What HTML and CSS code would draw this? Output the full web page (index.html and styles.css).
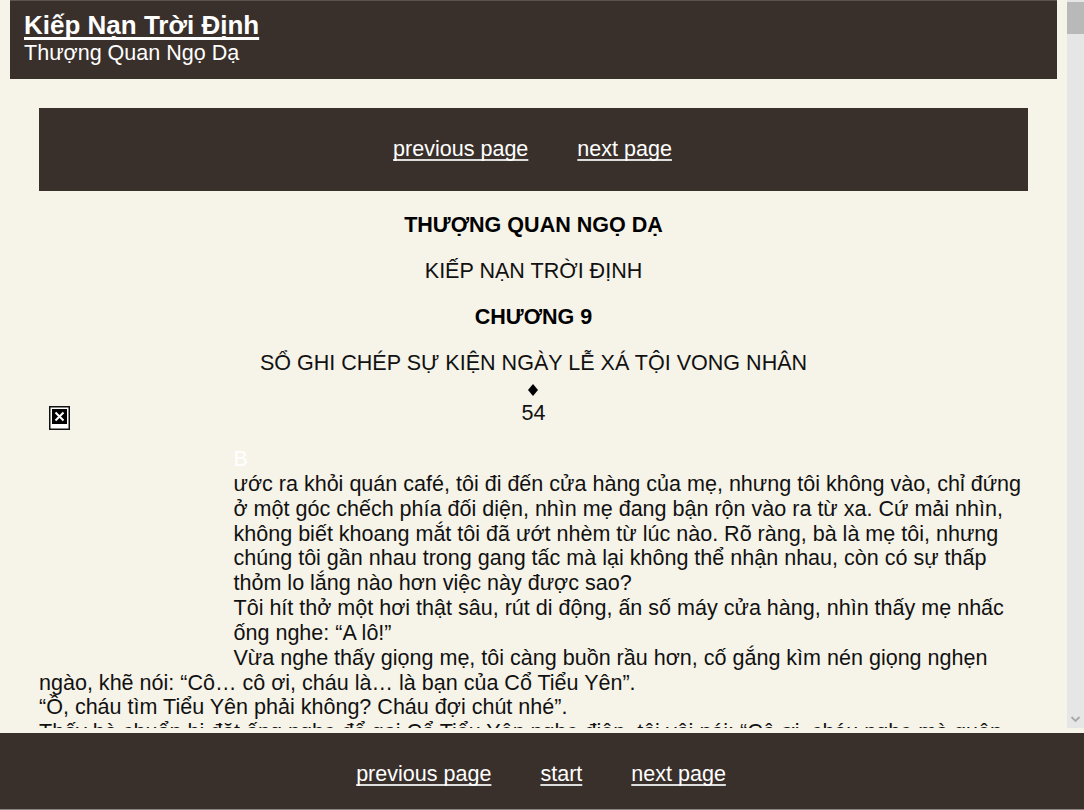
FILE: index.html
```
<!DOCTYPE html>
<html lang="vi">
	<head>
		<meta charset="UTF-8">
		<title>Kiếp Nạn Trời Định</title>
		<link rel="stylesheet" href="styles.css">
	</head>
	<body>
		<div class="reader">
			<div class="page">
				<div class="header">
					<a class="title" href="#">Kiếp Nạn Trời Định</a>
					<div class="author">Thượng Quan Ngọ Dạ</div>
				</div>
				<div class="content">
					<div class="pager">
						<a href="#">previous page</a>
						<a href="#">next page</a>
					</div>
					<p class="heading"><b>THƯỢNG QUAN NGỌ DẠ</b></p>
					<p class="heading">KIẾP NẠN TRỜI ĐỊNH</p>
					<p class="heading"><b>CHƯƠNG 9</b></p>
					<p class="heading last">SỔ GHI CHÉP SỰ KIỆN NGÀY LỄ XÁ TỘI VONG NHÂN</p>
					<div class="mark"><svg width="10" height="12" viewBox="0 0 10 12"><path d="M5 0l5 6-5 6-5-6z"/></svg></div>
					<div class="section">
						<!-- drop cap picture that did not load -->
						<svg class="dropcap" width="21" height="24" viewBox="0 0 21 24">
							<rect x="0.75" y="0.75" width="19.5" height="22.5" fill="#fff" stroke="#111" stroke-width="1.5"/>
							<rect x="3" y="3" width="15" height="15" fill="#000"/>
							<path d="M6.5 6.5l8 8M14.5 6.5l-8 8" stroke="#fff" stroke-width="2"/>
						</svg>
						<div class="number">54</div>
					</div>
					<div class="story">
						<div class="indent first">B</div>
						<div class="indent">ước ra khỏi quán café, tôi đi đến cửa hàng của mẹ, nhưng tôi không vào, chỉ đứng<br>
						ở một góc chếch phía đối diện, nhìn mẹ đang bận rộn vào ra từ xa. Cứ mải nhìn,<br>
						không biết khoang mắt tôi đã ướt nhèm từ lúc nào. Rõ ràng, bà là mẹ tôi, nhưng<br>
						chúng tôi gần nhau trong gang tấc mà lại không thể nhận nhau, còn có sự thấp<br>
						thỏm lo lắng nào hơn việc này được sao?<br>
						Tôi hít thở một hơi thật sâu, rút di động, ấn số máy cửa hàng, nhìn thấy mẹ nhấc<br>
						ống nghe: “A lô!”<br>
						Vừa nghe thấy giọng mẹ, tôi càng buồn rầu hơn, cố gắng kìm nén giọng nghẹn</div>
						<div>ngào, khẽ nói: “Cô… cô ơi, cháu là… là bạn của Cổ Tiểu Yên”.<br>
						“Ồ, cháu tìm Tiểu Yên phải không? Cháu đợi chút nhé”.<br>
						Thấy bà chuẩn bị đặt ống nghe để gọi Cổ Tiểu Yên nghe điện, tôi vội nói: “Cô ơi, cháu nghe mà quên</div>
					</div>
				</div>
			</div>
			<div class="scrollbar">
				<div class="thumb"></div>
				<svg width="17" height="18" viewBox="0 0 17 18"><path d="M4.5 7l4 4 4-4" fill="none" stroke="#a9a9a9" stroke-width="1.8"/></svg>
			</div>
		</div>
		<div class="footer">
			<a href="#">previous page</a>
			<a href="#">start</a>
			<a href="#">next page</a>
		</div>
	</body>
</html>
```
FILE: styles.css
```
body {
	margin: 0;
	height: 810px;
	overflow: hidden;
	background-color: #f6f3e8;
	color: #111;
	font-family: "Liberation Sans", Arial, sans-serif;
	font-size: 21.54px;
	line-height: 24.85px;
}
.reader {
	display: flex;
	height: 728px;
	margin-bottom: 5px;
	overflow: hidden;
}
.page {
	width: 1067px;
	overflow: hidden;
}
.header {
	box-sizing: border-box;
	height: 79px;
	margin: 0 10px;
	padding: 9px 14px 0;
	border-top: 1px solid #5b534d;
	background-color: #3a302b;
	color: #fff;
}
a {
	color: #fff;
	text-decoration: underline #ddd 2px;
	text-decoration-skip-ink: none;
	text-underline-offset: 3px;
}
.title {
	display: block;
	width: max-content;
	font-size: 26px;
	font-weight: bold;
	line-height: 30px;
	text-decoration: underline #fff 3px;
	text-decoration-skip-ink: none;
}
.author {
	line-height: 26px;
}
.content {
	margin: 29px 39px 0;
}
.pager, .footer {
	display: flex;
	justify-content: center;
	align-items: center;
	gap: 49px;
	background-color: #3a302b;
}
.pager {
	box-sizing: border-box;
	height: 83px;
	margin-bottom: 22px;
	padding-right: 2px;
}
.heading {
	margin: 0 0 22px;
	line-height: 24px;
	text-align: center;
}
.heading b {
	color: #000;
}
.last {
	margin-bottom: 0;
}
.mark {
	display: flex;
	justify-content: center;
	align-items: center;
	height: 30px;
	padding-right: 1px;
}
.section {
	display: grid;
	grid-template-columns: 195px 1fr 195px;
	height: 42px;
}
.dropcap {
	margin-left: 10px;
	margin-top: 1px;
}
.number {
	margin-top: -4px;
	line-height: 25px;
	text-align: center;
}
.story {
	white-space: nowrap;
}
.indent {
	margin-left: 194.5px;
}
.first {
	color: #fff;
}
.scrollbar {
	display: flex;
	flex-direction: column;
	justify-content: space-between;
	width: 17px;
	background-color: #e6e6e6;
}
.thumb {
	height: 32px;
	margin-top: 2px;
	background-color: #b9b9b9;
}
.footer {
	box-sizing: border-box;
	height: 77px;
	padding: 7px 2px 0 0;
	border-bottom: 1px solid #8c8682;
}
```
